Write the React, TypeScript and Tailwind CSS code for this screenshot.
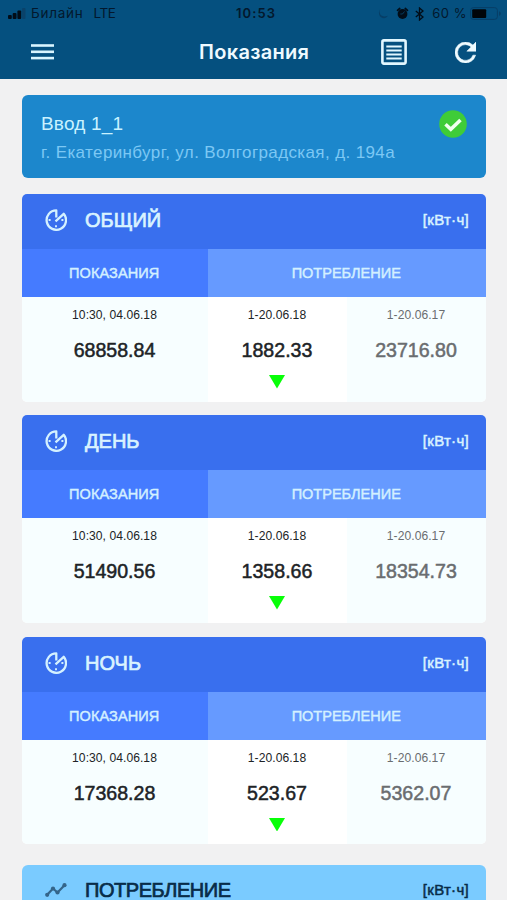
import type { ReactNode } from "react";

type Meter = {
  title: string;
  reading: string;
  current: string;
  previous: string;
};

const meters: Meter[] = [
  { title: "ОБЩИЙ", reading: "68858.84", current: "1882.33", previous: "23716.80" },
  { title: "ДЕНЬ", reading: "51490.56", current: "1358.66", previous: "18354.73" },
  { title: "НОЧЬ", reading: "17368.28", current: "523.67", previous: "5362.07" },
];

function StatusBar() {
  return (
    <div className="flex h-[27px] items-center pl-2 pr-[5px] text-[13px] text-[#03182d]">
      <div className="flex w-[228px] items-center">
        <svg className="mr-[5px] h-[11px] w-[18px]" viewBox="0 0 18 11">
          <g fill="#020d18">
            <rect x="0" y="7" width="3.8" height="4" rx="1" />
            <rect x="4.7" y="5" width="3.8" height="6" rx="1" />
            <rect x="9.4" y="2.5" width="3.8" height="8.5" rx="1" />
          </g>
          <rect x="14.1" y="0" width="3.4" height="11" rx="1" fill="#0a426a" />
        </svg>
        <span className="text-[13.5px] tracking-[0.75px]">Билайн</span>
        <span className="ml-[10px] text-[13.5px] tracking-[-0.4px]">LTE</span>
      </div>
      <span className="font-semibold tracking-[1.1px]">10:53</span>
      <div className="ml-auto flex items-center">
        <svg className="h-[11px] w-[11px]" viewBox="0 0 11 11">
          <path d="M2.2 1C0 6 4 10 9.8 7.8C8.300 10.800 4 11 1.800 8C.5 6 .7 3 2.200 1Z" fill="#073e66" />
        </svg>
        <svg className="ml-[7px] h-[13px] w-[13px]" viewBox="0 0 13 13">
          <circle cx="6.500" cy="7" r="4.900" fill="#020d18" />
          <path d="M1.500 3.300 3.700 1.500M9.300 1.500 11.500 3.300" stroke="#020d18" strokeWidth="1.700" strokeLinecap="round" />
          <path d="M8.500 4.500 6.500 7H4.300" fill="none" stroke="#07507f" strokeWidth="0.7" />
        </svg>
        <svg className="ml-[6px] h-[14px] w-[9px]" viewBox="0 0 9 14">
          <path d="M.8 4 8 10 4.500 13V1L8 4 .8 10" fill="none" stroke="#020d18" strokeWidth="1.300" />
        </svg>
        <span className="ml-[8px] tracking-[0.5px]">60 %</span>
        <svg className="ml-[3px] mr-[1px] h-[13px] w-[31px]" viewBox="0 0 31 13">
          <rect x=".6" y=".6" width="26.800" height="11.800" rx="2.800" fill="none" stroke="#073e66" />
          <rect x="2.200" y="2.200" width="14" height="8.800" rx="1" fill="#010509" />
          <path d="M29 4.200C31.300 5 31.300 8 29 8.800Z" fill="#073e66" />
        </svg>
      </div>
    </div>
  );
}

function TopBar() {
  return (
    <header className="h-[79px] bg-[#05507f] font-['Inter','Liberation_Sans',sans-serif]">
      <StatusBar />
      <div className="flex h-[50px] items-center pl-[31px] pr-[31px] text-[#effaff]">
        <svg className="h-4 w-[23px]" viewBox="0 0 23 16" fill="#d9f5ff">
          <rect width="23" height="2.600" y="0.200" />
          <rect width="23" height="2.600" y="6.500" />
          <rect width="23" height="2.600" y="12.800" />
        </svg>
        <h1 className="ml-[145px] text-[20px] font-semibold tracking-[0.3px]">Показания</h1>
        <svg className="ml-auto h-[26px] w-[26px]" viewBox="0 0 26 26" fill="none" stroke="#e2f7ff">
          <rect x="1.400" y="1.400" width="23.200" height="23.200" rx="1.500" strokeWidth="2.600" />
          <path d="M5.300 7.500H20.700M5.300 11.500H20.700M5.300 15.500H20.700M5.300 19.500H20.700" strokeWidth="1.900" />
        </svg>
        <svg className="ml-[48px] h-[21px] w-[21px]" viewBox="4 4 16 16" fill="#effbff" stroke="#effbff" strokeWidth="0.4">
          <path d="M17.650 6.350A7.960 7.960 0 0 0 12 4a8 8 0 1 0 7.730 10h-2.080A6 6 0 1 1 12 6c1.660 0 3.140.690 4.220 1.780L13 11h7V4l-2.350 2.350Z" />
        </svg>
      </div>
    </header>
  );
}

function AddressCard() {
  return (
    <section className="flex h-[83px] justify-between rounded-[6px] bg-[#1c87cc] pl-[19px] pr-[19px] pt-[15px]">
      <div>
        <div className="text-[19px] leading-[28px] tracking-[0.2px] text-[#c9f2ff]">Ввод 1_1</div>
        <div className="whitespace-nowrap text-[17px] leading-[29px] tracking-[0.38px] text-[#7cc8f4]">
          г. Екатеринбург, ул. Волгоградская, д. 194а
        </div>
      </div>
      <svg className="h-7 w-7 shrink-0" viewBox="0 0 28 28">
        <circle cx="14" cy="14" r="13.800" fill="#3fcc38" />
        <path d="M6.500 14.300 11.800 19.200 21.500 10" fill="none" stroke="#f0fff0" strokeWidth="3.600" />
      </svg>
    </section>
  );
}

function ClockIcon() {
  return (
    <svg className="h-[22px] w-[22px]" viewBox="0 0 22 22" fill="none" stroke="#d4f1ff">
      <path d="M11.300 8.500V1.400A9.700 9.700 0 1 0 18.700 4.800L10.500 12.300" strokeWidth="2.300" strokeLinejoin="round" />
      <path d="M3.600 11H5.600M16.400 11H18.400M11 16.200V18.200" strokeWidth="1.900" />
    </svg>
  );
}

function CardHeader({ icon, title, className, titleClass = "" }: { icon: ReactNode; title: string; className: string; titleClass?: string }) {
  return (
    <div className={`flex items-center pl-[23px] pr-[18px] ${className}`}>
      {icon}
      <h2 className={`ml-[18px] text-[20px] leading-6 [-webkit-text-stroke:0.7px_currentColor] ${titleClass}`}>{title}</h2>
      <span className="ml-auto -mr-px text-[15px] leading-5 tracking-[0.3px] [-webkit-text-stroke:0.5px_currentColor]">[кВт·ч]</span>
    </div>
  );
}

function Cell({ date, value, muted, down }: { date: string; value: string; muted?: boolean; down?: boolean }) {
  return (
    <div className={`flex flex-col items-center pr-px pt-[11px] ${down ? "bg-white" : "bg-[#f7feff]"} ${muted ? "text-[#6a6d70]" : "text-[#202326]"}`}>
      <span className="text-[12.1px] leading-[14px] tracking-[0.05px]">{date}</span>
      <span className="mt-[16px] text-[19.6px] leading-6 [-webkit-text-stroke:0.5px_currentColor]">{value}</span>
      {down && (
        <svg className="mt-[13px] h-[13.500px] w-4" viewBox="0 0 16 13.500">
          <path d="M0 0H16L8 13.500Z" fill="#08ff08" />
        </svg>
      )}
    </div>
  );
}

function MeterCard({ title, reading, current, previous }: Meter) {
  return (
    <section className="mb-[13.500px] h-[207.800px] overflow-hidden rounded-[5px] bg-white">
      <CardHeader icon={<ClockIcon />} title={title} className="h-[55px] bg-[#396fee] pb-[3px] text-[#d9f3ff]" />
      <div className="grid h-[48px] grid-cols-[185.500px_278.500px] text-center text-[14.500px] leading-[49px] text-[#d3f0ff] [-webkit-text-stroke:0.45px_currentColor]">
        <div className="bg-[#457bff] pr-px tracking-[0.1px]">ПОКАЗАНИЯ</div>
        <div className="bg-[#669aff] pr-px">ПОТРЕБЛЕНИЕ</div>
      </div>
      <div className="grid h-[105px] grid-cols-[186px_139px_139px]">
        <Cell date="10:30, 04.06.18" value={reading} />
        <Cell date="1-20.06.18" value={current} down />
        <Cell date="1-20.06.17" value={previous} muted />
      </div>
    </section>
  );
}

function TrendIcon() {
  return (
    <svg className="h-[14px] w-[22px]" viewBox="0 0 22 14" fill="#34658a" stroke="#34658a">
      <path d="M2.200 11.800 8 5.500 12.500 9.500 19.500 2.200" fill="none" strokeWidth="2.200" />
      <g stroke="none">
        <circle cx="2.200" cy="11.800" r="2.100" />
        <circle cx="8" cy="5.500" r="2.100" />
        <circle cx="12.500" cy="9.500" r="2.100" />
        <circle cx="19.500" cy="2.200" r="2.100" />
      </g>
    </svg>
  );
}

export default function App() {
  return (
    <div className="h-[900px] w-[507px] overflow-hidden bg-[#f1f1f2] font-['Liberation_Sans',Arial,sans-serif]">
      <TopBar />
      <main className="pl-[22px] pr-[21px] pt-4">
        <AddressCard />
        <div className="pt-4">
          {meters.map((m) => (
            <MeterCard key={m.title} {...m} />
          ))}
        </div>
        <section className="mt-[21px] h-[35px] rounded-t-[6px] bg-[#7acbff]">
          <CardHeader icon={<TrendIcon />} title="ПОТРЕБЛЕНИЕ" className="pt-[15px] text-[#082c48]" titleClass="tracking-[-0.45px] leading-[20px]" />
        </section>
      </main>
    </div>
  );
}
